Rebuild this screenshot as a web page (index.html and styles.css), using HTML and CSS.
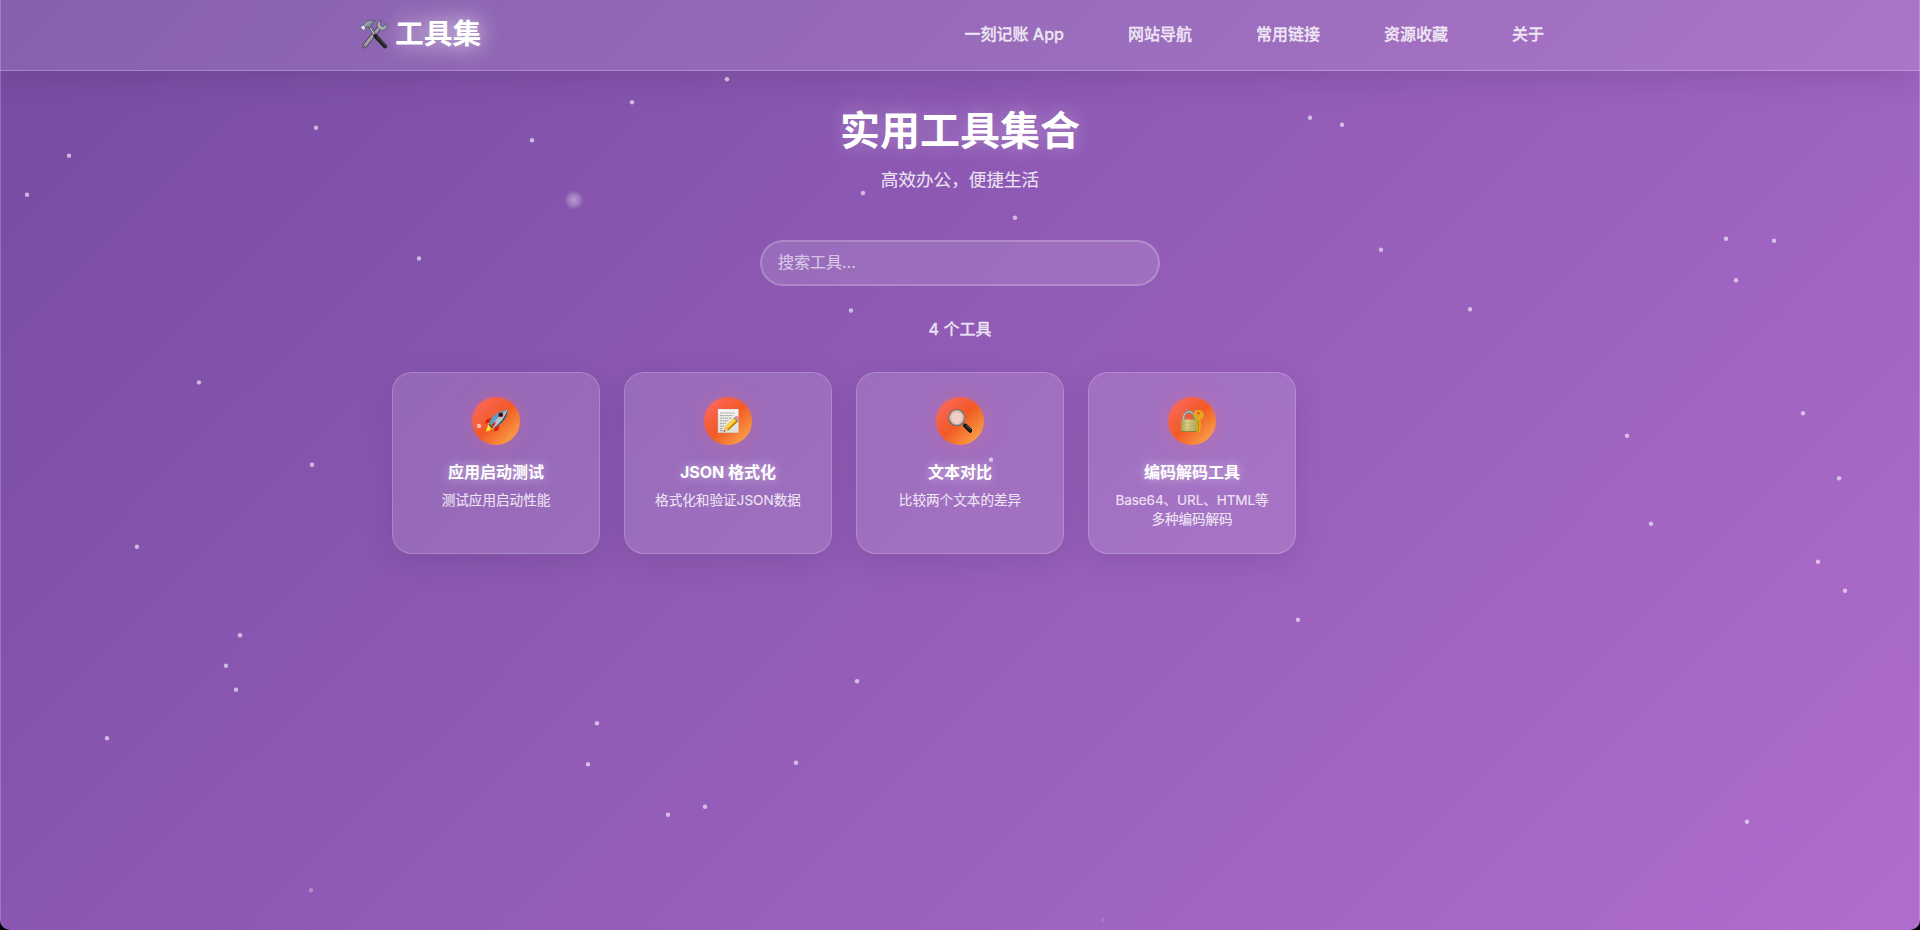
FILE: index.html
```html
<!DOCTYPE html>
<html lang="zh-CN">
<head>
<meta charset="UTF-8">
<title>工具集</title>
<link rel="stylesheet" href="styles.css">
</head>
<body>
<div class="page">
  <header class="header">
    <div class="header-inner">
      <a class="logo">
        <svg class="logo-icon" viewBox="0 0 28 30">
          <defs>
            <linearGradient id="steel" x1="0" y1="0" x2="1" y2="1"><stop offset="0" stop-color="#d5dde2"/><stop offset=".5" stop-color="#87919a"/><stop offset="1" stop-color="#3f474d"/></linearGradient>
          </defs>
          <path d="M19.5 8.5 L4.5 27" stroke="#4d4650" stroke-width="4.6" stroke-linecap="round"/>
          <path d="M19.5 8.5 L4.5 27" stroke="#a9a0ae" stroke-width="2.8" stroke-linecap="round"/>
          <circle cx="4.6" cy="27" r=".8" fill="#4d4650"/>
          <path d="M21.2 1.2 C17.5 2 16.2 5.5 17.6 8.4 C19 11.4 22.5 12 25 10.4 C26.8 9.2 27.5 6.5 26.8 4.2 L24 7.4 L21.2 6.8 L20.4 4.2 Z" fill="#a5adb2" stroke="#4a5157" stroke-width=".8"/>
          <path d="M9.5 8 L15.5 17" stroke="#4c5257" stroke-width="2.8"/>
          <path d="M9.5 8 L15 16.2" stroke="#c5ccd0" stroke-width="1.2"/>
          <path d="M15.5 17 L25 27.3" stroke="#1f2123" stroke-width="4.2" stroke-linecap="round"/>
          <path d="M17 17 L25.5 26.5" stroke="#55585c" stroke-width=".8"/>
          <path d="M.8 8.2 L3.8 5.8 C5.8 2.4 9 .8 15.2 1.2 C12.8 2.4 12 4 12 6 L9.8 9 L7.3 7.5 L5.6 8.5 L3.5 11.2 Z" fill="url(#steel)" stroke="#4a535a" stroke-width=".8"/>
          <path d="M.8 8.2 L3.2 6.4 L5.2 9 L3.5 11.2 Z" fill="#e3f2fa"/>
        </svg>
        <span>工具集</span>
      </a>
      <nav class="nav">
        <a>一刻记账 App</a>
        <a>网站导航</a>
        <a>常用链接</a>
        <a>资源收藏</a>
        <a>关于</a>
      </nav>
    </div>
  </header>

  <main class="main">
    <h1 class="title">实用工具集合</h1>
    <p class="subtitle">高效办公，便捷生活</p>
    <input class="search" type="text" placeholder="搜索工具...">
    <p class="count">4 个工具</p>

    <div class="grid">
      <article class="card">
        <div class="badge">
          <svg viewBox="0 0 24 24">
            <path d="M7.5 8.5 L2.2 10.8 L1 14.8 L6.5 13Z M15.5 16 L14 21.5 L9.8 22.6 L11.5 17Z" fill="#d9200f"/>
            <path d="M4.5 14 L1.8 22.5 L5.5 22 L9 18.8 L7 14Z" fill="#ffd21c"/>
            <path d="M5.2 15.5 L3.4 21 L7.2 18.3Z" fill="#fff36b"/>
            <path d="M5.3 14.2 C7 7.5 13 2.2 23.4 .7 C23.8 8.8 18.5 15.5 9.2 18.7 Z" fill="#5b9cc6"/>
            <path d="M7.3 16.5 C12 10.5 17 5 23.4 .7 C23.8 8.8 18.5 15.5 9.2 18.7 Z" fill="#b8c3c9"/>
            <path d="M9.2 18.7 C16 15 20.5 9 23.4 .7 C23.8 8.8 18.5 15.5 9.2 18.7Z" fill="#474e59"/>
            <path d="M5.3 14.2 L9.2 18.7 L7.5 19 L4.6 15.8Z" fill="#3b4650"/>
            <circle cx="16.8" cy="5.8" r="2.5" fill="#a22a2a"/><circle cx="16.8" cy="5.8" r="1.8" fill="#160f14"/>
            <path d="M8.6 14.8 L12.2 12.6 L10.3 16.2 L6 19.8Z" fill="#c71b13"/>
          </svg>
        </div>
        <h3>应用启动测试</h3>
        <p>测试应用启动性能</p>
      </article>

      <article class="card">
        <div class="badge">
          <svg viewBox="0 0 24 24">
            <defs><linearGradient id="paper" x1="0" y1="0" x2="0" y2="1"><stop offset="0" stop-color="#f6f6f4"/><stop offset="1" stop-color="#dededc"/></linearGradient></defs>
            <rect x="2" y="0" width="20.5" height="23.8" fill="url(#paper)" stroke="#c6bdb7" stroke-width=".5"/>
            <path d="M4 4H18.5M4 6.6H17M4 9.2H16M4 11.8H13M4 14.4H10M4 17H8M4 19.6H7M4 21.6H7" stroke="#8d8d8d" stroke-width=".8" stroke-dasharray="2.2 .5 1.3 .4"/>
            <path d="M8.8 18.2 L18 8.7 L22 12.4 L12.2 21.5 L7.7 22.6Z" fill="#f3b91b"/>
            <path d="M9.8 18 L18.5 9.2 L20 10.5 L11 19.4Z" fill="#ffd947"/>
            <path d="M12.2 21.5 L22 12.4 L21.1 11.6 L11.3 20.6Z" fill="#b67d13"/>
            <path d="M8.8 18.2 L12.2 21.5 L7.7 22.6Z" fill="#e7cda0"/><path d="M8.1 20.9 L9.3 22.2 L7.5 22.8Z" fill="#222"/>
            <path d="M17.4 9.3 L19.1 7.6 L22.9 11.2 L21.4 12.8Z" fill="#8ba0a1"/>
            <path d="M18.8 7.8 L20 7 C22 6.5 23.8 8.4 23.3 10.5 L22.5 11.4Z" fill="#ef8b90"/>
          </svg>
        </div>
        <h3>JSON 格式化</h3>
        <p>格式化和验证JSON数据</p>
      </article>

      <article class="card">
        <div class="badge">
          <svg viewBox="0 0 24 24">
            <path d="M14.5 14.2 L18 17.7" stroke="#707779" stroke-width="2"/>
            <path d="M17.3 16.8 L22.4 21.6" stroke="#15191b" stroke-width="4.3" stroke-linecap="round"/>
            <path d="M18 16.4 L23.2 21" stroke="#65757c" stroke-width=".8"/>
            <circle cx="8.8" cy="8.6" r="7.7" fill="#f2cfc5" stroke="#55595a" stroke-width="1.8"/>
            <circle cx="8.8" cy="8.6" r="7.5" fill="none" stroke="#c4c8c6" stroke-width=".8"/>
            <circle cx="8.8" cy="8.6" r="5.6" fill="none" stroke="#e7b9ab" stroke-width=".8"/>
          </svg>
        </div>
        <h3>文本对比</h3>
        <p>比较两个文本的差异</p>
      </article>

      <article class="card">
        <div class="badge">
          <svg viewBox="0 0 24 24">
            <defs><linearGradient id="brass" x1="0" y1="0" x2="1" y2="0"><stop offset="0" stop-color="#a59a4e"/><stop offset=".35" stop-color="#dad088"/><stop offset="1" stop-color="#aaa253"/></linearGradient></defs>
            <path d="M4 11.5 V8 C4 .8 13.8 .8 13.8 8 V11.5" fill="none" stroke="#6f8a96" stroke-width="2.6"/>
            <path d="M3.7 11 V8 C4 1.8 11.5 1.2 13 5" fill="none" stroke="#c4d5dc" stroke-width="1"/>
            <rect x="1" y="10.6" width="16.8" height="12.2" rx=".8" fill="url(#brass)"/>
            <path d="M1.2 14.2H17.6M1.2 17.2H17.6M1.2 20.2H17.6" stroke="#b0a860" stroke-width=".45"/>
            <path d="M1.3 22.4H17.6" stroke="#746f36" stroke-width=".8"/>
            <path fill-rule="evenodd" d="M18.4 1 C14.8 1 12.6 3.6 13.4 6.8 C13.8 8.8 15.2 10.1 16.8 10.7 V22.4 L18.5 23.7 L20.2 22.3 V20.6 L21.4 19.7 L20.2 18.6 L21.5 17.3 L20.2 16 L21.3 14.8 L20.5 13.9 V10.7 C22.6 9.9 24 8.1 23.8 5.6 C23.5 2.7 21.3 1 18.4 1Z M18.5 2.8A1.5 1.5 0 1 1 18.4 5.8A1.5 1.5 0 0 1 18.5 2.8Z" fill="#e3a91d"/>
            <path d="M18.3 11V22.3" stroke="#b67b08" stroke-width=".8"/>
          </svg>
        </div>
        <h3>编码解码工具</h3>
        <p class="tight">Base64、URL、HTML等多种编码解码</p>
      </article>
    </div>
  </main>

  <svg class="particles" viewBox="0 0 1920 930">
    <defs><radialGradient id="glow"><stop offset="0" stop-color="#fff" stop-opacity=".42"/><stop offset=".5" stop-color="#fff" stop-opacity=".24"/><stop offset="1" stop-color="#fff" stop-opacity="0"/></radialGradient></defs>
    <circle cx="574" cy="200" r="10" fill="url(#glow)"/>
    <g fill="#fff" fill-opacity=".6" transform="translate(0 -.3)">
      <circle cx="727" cy="79.5" r="2.2"/><circle cx="632" cy="102.5" r="2.2"/><circle cx="316" cy="128" r="2.2"/><circle cx="532" cy="140.5" r="2.2"/>
      <circle cx="69" cy="156" r="2.2"/><circle cx="27" cy="195" r="2.2"/><circle cx="419" cy="258.8" r="2.2"/><circle cx="863" cy="193.3" r="2.2"/>
      <circle cx="1015" cy="218" r="2.2"/><circle cx="851" cy="310.8" r="2.2"/><circle cx="1310" cy="118" r="2.2"/><circle cx="1342" cy="125" r="2.2"/>
      <circle cx="1381" cy="250" r="2.2"/><circle cx="1726" cy="239" r="2.2"/><circle cx="1774" cy="241" r="2.2"/><circle cx="1736" cy="280.5" r="2.2"/>
      <circle cx="1470" cy="309.5" r="2.2"/><circle cx="1803" cy="413.5" r="2.2"/><circle cx="1627" cy="436" r="2.2"/><circle cx="1839" cy="478.5" r="2.2"/>
      <circle cx="1651" cy="524" r="2.2"/><circle cx="1818" cy="562" r="2.2"/><circle cx="1845" cy="591" r="2.2"/><circle cx="1298" cy="620" r="2.2"/>
      <circle cx="199" cy="382.7" r="2.2"/><circle cx="312" cy="465" r="2.2"/><circle cx="137" cy="547" r="2.2"/><circle cx="240" cy="635.5" r="2.2"/>
      <circle cx="226" cy="666" r="2.2"/><circle cx="236" cy="690" r="2.2"/><circle cx="107" cy="738.5" r="2.2"/><circle cx="597" cy="723.5" r="2.2"/>
      <circle cx="588" cy="764.5" r="2.2"/><circle cx="796" cy="763" r="2.2"/><circle cx="857" cy="681.5" r="2.2"/><circle cx="668" cy="815" r="2.2"/>
      <circle cx="705" cy="807" r="2.2"/><circle cx="1747" cy="822" r="2.2"/><circle cx="479" cy="426.3" r="2.2"/><circle cx="991" cy="460" r="2.2"/>
      <circle cx="311" cy="890.5" r="2.2" fill-opacity=".3"/><circle cx="1103" cy="920" r="2.2" fill-opacity=".12"/>
    </g>
  </svg>
</div>
</body>
</html>
```
FILE: styles.css
```css
* { margin: 0; padding: 0; box-sizing: border-box; }

body {
  background: #000;
  font-family: Inter, "Noto Sans CJK SC", sans-serif;
  color: #fff;
}

.page {
  position: relative;
  height: 930px;
  overflow: hidden;
  border-radius: 0 0 10px 10px;
  background: linear-gradient(135deg, #764ba2, #b06dce);
}

.page::after {
  content: "";
  position: absolute;
  inset: 0;
  border: 1px solid rgba(255, 255, 255, 0.2);
  border-width: 0 1px;
  border-radius: 0 0 10px 10px;
  pointer-events: none;
}

.header {
  height: 71px;
  background: rgba(255, 255, 255, 0.12);
  border-bottom: 1px solid rgba(255, 255, 255, 0.25);
  box-shadow: 0 8px 32px rgba(0, 0, 0, 0.1);
}

.header-inner {
  width: 1200px;
  height: 70px;
  margin: 0 auto;
  display: flex;
  align-items: center;
  justify-content: space-between;
}

.logo {
  display: flex;
  align-items: center;
  gap: 7px;
  padding-bottom: 2px;
  font-size: 28.8px;
  font-weight: 700;
  line-height: 40px;
  text-shadow: 0 0 20px rgba(255, 255, 255, 0.5), 0 0 30px rgba(255, 255, 255, 0.4);
}

.logo-icon { width: 28px; height: 30px; fill: none; }

.nav { display: flex; gap: 32px; padding-bottom: 2px; }

.nav a {
  padding: 0 16px;
  font-size: 16px;
  font-weight: 500;
  line-height: 24px;
  color: rgba(255, 255, 255, 0.8);
  -webkit-text-stroke: 0.3px rgba(255, 255, 255, 0.8);
}

.main {
  width: 1136px;
  margin: 0 auto;
  padding-top: 30px;
  display: flex;
  flex-direction: column;
  align-items: center;
}

.title {
  font-size: 40px;
  font-weight: 700;
  line-height: 60px;
  text-shadow: 0 0 20px rgba(255, 255, 255, 0.3);
}

.subtitle {
  margin-top: 5px;
  font-size: 17.6px;
  line-height: 28px;
  color: rgba(255, 255, 255, 0.83);
  -webkit-text-stroke: 0.2px rgba(255, 255, 255, 0.6);
}

.search {
  width: 400px;
  height: 46px;
  margin-top: 46px;
  padding: 0 16px 2px;
  border: 2px solid rgba(255, 255, 255, 0.2);
  border-radius: 25px;
  background: rgba(255, 255, 255, 0.12);
  font: inherit;
  font-size: 16px;
  color: #fff;
}

.search::placeholder {
  color: rgba(255, 255, 255, 0.6);
  -webkit-text-stroke: 0.2px rgba(255, 255, 255, 0.5);
}

.count {
  margin-top: 31px;
  font-size: 16px;
  font-weight: 500;
  line-height: 24px;
  color: rgba(255, 255, 255, 0.8);
  -webkit-text-stroke: 0.3px rgba(255, 255, 255, 0.7);
}

.grid {
  width: 100%;
  margin-top: 31px;
  display: grid;
  grid-template-columns: repeat(5, 1fr);
  gap: 24px;
}

.card {
  height: 182px;
  padding: 24px;
  border: 1px solid rgba(255, 255, 255, 0.2);
  border-radius: 20px;
  background: rgba(255, 255, 255, 0.12);
  box-shadow: 0 8px 32px rgba(0, 0, 0, 0.1);
  text-align: center;
}

.badge {
  width: 48px;
  height: 48px;
  margin: 0 auto 15px;
  display: grid;
  place-items: center;
  border-radius: 50%;
  background: linear-gradient(135deg, #ff6b6b, #f15a24 50%, #fbb650);
  box-shadow: 0 0 20px rgba(255, 107, 107, 0.3);
}

.badge svg { width: 24px; height: 24px; }

.card h3 {
  font-size: 16px;
  font-weight: 700;
  line-height: 24px;
  text-shadow: 0 0 10px rgba(255, 255, 255, 0.5);
}

.card p {
  margin-top: 7px;
  font-size: 13.6px;
  line-height: 19px;
  color: rgba(255, 255, 255, 0.8);
  -webkit-text-stroke: 0.2px rgba(255, 255, 255, 0.6);
}

.card .tight { letter-spacing: -0.12px; }

.particles {
  position: absolute;
  inset: 0;
  width: 1920px;
  height: 930px;
  pointer-events: none;
}
```
